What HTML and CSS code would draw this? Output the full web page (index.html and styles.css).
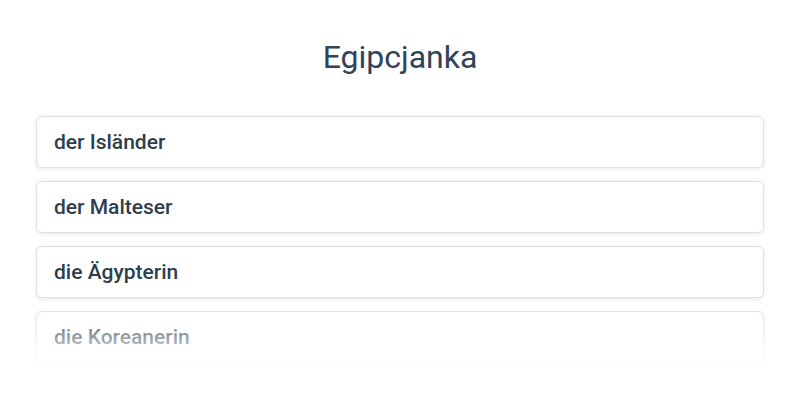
FILE: index.html
```html
<!DOCTYPE html>
<html lang="de">
<head>
    <meta charset="UTF-8">
    <meta name="viewport" content="width=device-width, initial-scale=1.0">
    <title>Egipcjanka</title>
    <link rel="stylesheet" href="styles.css">
</head>
<body>
    <div class="quiz-container">
        <h1 class="question">Egipcjanka</h1>
        <div class="answers">
            <div class="answer">der Isländer</div>
            <div class="answer">der Malteser</div>
            <div class="answer">die Ägypterin</div>
            <div class="answer">die Koreanerin</div>
        </div>
    </div>
</body>
</html>
```

FILE: styles.css
```css
body {
    margin: 0;
    background-color: #ffffff;
    color: #2c3e50;
    font-family: Roboto, 'Noto Sans', sans-serif;
}

.quiz-container {
    padding: 0 36px;
}

.question {
    margin: 0 0 39px;
    padding-top: 37px;
    text-align: center;
    font-size: 32px;
    font-weight: 400;
    line-height: 40px;
    color: #2f435a;
}

.answers {
    position: relative;
    display: flex;
    flex-direction: column;
    gap: 13px;
    padding-bottom: 2px;
}

/* fade out the last answer */
.answers::after {
    content: '';
    position: absolute;
    left: -10px;
    right: -10px;
    bottom: 0;
    height: 60px;
    background: linear-gradient(to bottom, rgba(255, 255, 255, 0), rgba(255, 255, 255, 0.95));
    pointer-events: none;
}

.answer {
    display: flex;
    align-items: center;
    height: 52px;
    box-sizing: border-box;
    padding: 0 17px;
    border: 1px solid #e0e0e0;
    border-radius: 6px;
    background-color: #ffffff;
    box-shadow: 0 1px 4px rgba(0, 0, 0, 0.1);
    font-size: 21px;
    font-weight: 500;
}
```
